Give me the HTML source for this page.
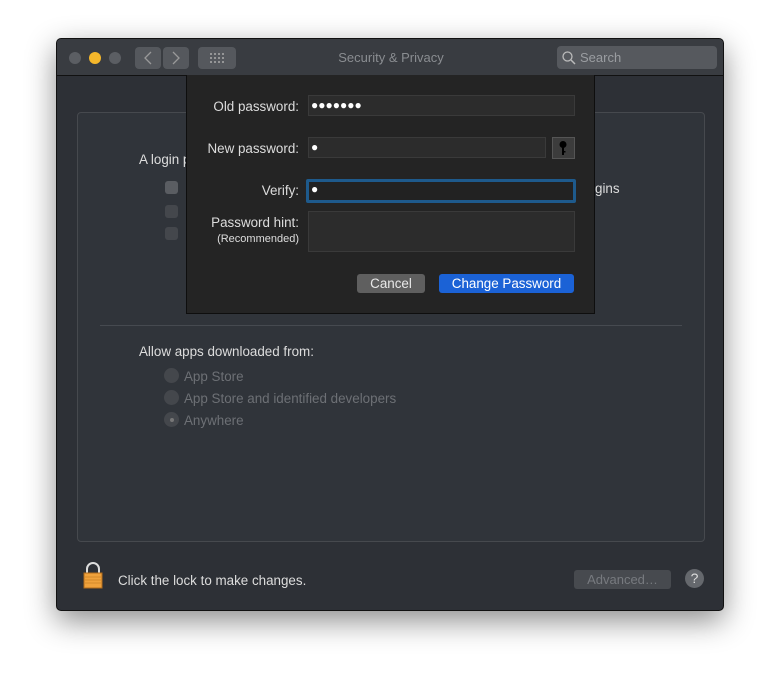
<!DOCTYPE html>
<html><head><style>
*{box-sizing:border-box;margin:0;padding:0}
body{width:780px;height:685px;background:#fff;position:relative;font-family:"Liberation Sans",sans-serif;font-size:13.4px;overflow:hidden}
.a{position:absolute}
.win{left:56px;top:38px;width:668px;height:573px;background:#2d3036;border:1px solid #111;border-radius:5px;box-shadow:0 10px 30px rgba(0,0,0,.45);overflow:hidden}
.tb{left:0;top:0;width:668px;height:37px;background:#393c41;border-bottom:1px solid #111}
.dot{width:12px;height:12px;border-radius:50%;top:13px;background:#5b5e63}
.btn{background:#55585d;border-radius:4px}
.t{color:#ddd}
.g{color:#6d7075}
.field{background:#2c2c2c;border:1px solid #3a3a3a}
.bul{color:#fff;font-size:12px}
</style></head><body>
<div class="a win">
 <div class="a tb">
  <div class="a dot" style="left:12px"></div>
  <div class="a dot" style="left:32px;background:#f5b72b"></div>
  <div class="a dot" style="left:52px"></div>
  <div class="a btn" style="left:78px;top:8px;width:26px;height:22px"></div>
  <div class="a btn" style="left:106px;top:8px;width:26px;height:22px"></div>
  <svg class="a" style="left:78px;top:8px" width="54" height="22"><path d="M16 5 L10 11 L16 17 M38 5 L44 11 L38 17" stroke="#999" stroke-width="1.3" fill="none"/></svg>
  <div class="a btn" style="left:141px;top:8px;width:38px;height:22px"></div>
  <svg class="a" style="left:152px;top:13px" width="16" height="12"><g fill="#aaa"><circle cx="2" cy="2" r="1"/><circle cx="6" cy="2" r="1"/><circle cx="10" cy="2" r="1"/><circle cx="14" cy="2" r="1"/><circle cx="2" cy="6" r="1"/><circle cx="6" cy="6" r="1"/><circle cx="10" cy="6" r="1"/><circle cx="14" cy="6" r="1"/><circle cx="2" cy="10" r="1"/><circle cx="6" cy="10" r="1"/><circle cx="10" cy="10" r="1"/><circle cx="14" cy="10" r="1"/></g></svg>
  <div class="a" style="left:0;width:668px;top:11px;text-align:center;color:#8a8d91;font-size:13px">Security &amp; Privacy</div>
  <div class="a btn" style="left:500px;top:7px;width:160px;height:23px;background:#56595e"></div>
  <svg class="a" style="left:504px;top:11px" width="16" height="16"><circle cx="6.5" cy="6.5" r="4.5" stroke="#bbb" stroke-width="1.3" fill="none"/><path d="M10 10 L14 14" stroke="#bbb" stroke-width="1.5"/></svg>
  <div class="a" style="left:523px;top:11px;color:#9a9da1;font-size:13px">Search</div>
 </div>
 <div class="a" style="left:20px;top:73px;width:628px;height:430px;border:1px solid #46494e;border-radius:4px;background:#30343a"></div>
 <div class="a t" style="left:82px;top:113px">A login p</div>
 <div class="a" style="left:108px;top:142px;width:13px;height:13px;background:#5a5d62;border-radius:3px"></div>
 <div class="a" style="left:108px;top:166px;width:13px;height:13px;background:#44474c;border-radius:3px"></div>
 <div class="a" style="left:108px;top:188px;width:13px;height:13px;background:#44474c;border-radius:3px"></div>
 <div class="a t" style="left:538px;top:142px">gins</div>
 <div class="a" style="left:43px;top:286px;width:582px;height:1px;background:#464a50"></div>
 <div class="a t" style="left:82px;top:305px">Allow apps downloaded from:</div>
 <div class="a" style="left:107px;top:329px;width:15px;height:15px;border-radius:50%;background:#44474c"></div>
 <div class="a" style="left:107px;top:351px;width:15px;height:15px;border-radius:50%;background:#44474c"></div>
 <div class="a" style="left:107px;top:373px;width:15px;height:15px;border-radius:50%;background:#44474c"></div>
 <div class="a" style="left:113px;top:379px;width:4px;height:4px;border-radius:50%;background:#777"></div>
 <div class="a g" style="left:127px;top:330px">App Store</div>
 <div class="a g" style="left:127px;top:352px">App Store and identified developers</div>
 <div class="a g" style="left:127px;top:374px">Anywhere</div>
 <svg class="a" style="left:25px;top:522px" width="24" height="30"><path d="M5 12 V8 A6 6 0 0 1 17 8 V12" stroke="#ddd" stroke-width="2" fill="none"/><rect x="2" y="12" width="18" height="15" fill="#f0a23c" stroke="#b06a1a"/><path d="M3 16h16M3 19h16M3 22h16" stroke="#d58a2a"/></svg>
 <div class="a t" style="left:61px;top:534px">Click the lock to make changes.</div>
 <div class="a" style="left:517px;top:531px;width:97px;height:19px;background:#474a4f;border-radius:3px;color:#777a7f;text-align:center;line-height:19px;font-size:13px">Advanced…</div>
 <div class="a" style="left:628px;top:530px;width:19px;height:19px;border-radius:50%;background:#65686d;color:#ddd;text-align:center;line-height:19px;font-size:14px">?</div>
</div>
<div class="a" style="left:186px;top:75px;width:409px;height:239px;background:#242424;border:1px solid #0e0e0e;border-top:none">
 <div class="a t" style="left:0;width:112px;text-align:right;top:24px">Old password:</div>
 <div class="a field" style="left:121px;top:20px;width:267px;height:21px"></div>
 <div class="a bul" style="left:124px;top:23px">●●●●●●●</div>
 <div class="a t" style="left:0;width:112px;text-align:right;top:66px">New password:</div>
 <div class="a field" style="left:121px;top:62px;width:238px;height:21px"></div>
 <div class="a bul" style="left:124px;top:65px">●</div>
 <div class="a" style="left:365px;top:62px;width:23px;height:22px;background:#3c3c3c;border:1px solid #555"></div>
 <svg class="a" style="left:370px;top:65px" width="12" height="16"><circle cx="6" cy="4.5" r="3.5" fill="#000"/><rect x="5" y="7" width="2" height="8" fill="#000"/><rect x="6" y="11" width="2.5" height="1.5" fill="#000"/></svg>
 <div class="a t" style="left:0;width:112px;text-align:right;top:108px">Verify:</div>
 <div class="a" style="left:119px;top:104px;width:270px;height:24px;background:#222;border:3px solid #1e5a8c;border-radius:2px"></div>
 <div class="a bul" style="left:124px;top:107px">●</div>
 <div class="a t" style="left:0;width:112px;text-align:right;top:140px">Password hint:</div>
 <div class="a t" style="left:0;width:112px;text-align:right;top:158px;font-size:11px">(Recommended)</div>
 <div class="a field" style="left:121px;top:136px;width:267px;height:41px"></div>
 <div class="a" style="left:170px;top:199px;width:68px;height:19px;background:#5f5f5f;border-radius:3px;color:#e8e8e8;text-align:center;line-height:19px">Cancel</div>
 <div class="a" style="left:252px;top:199px;width:135px;height:19px;background:#1b62d6;border-radius:3px;color:#fff;text-align:center;line-height:19px">Change Password</div>
</div>
</body></html>
